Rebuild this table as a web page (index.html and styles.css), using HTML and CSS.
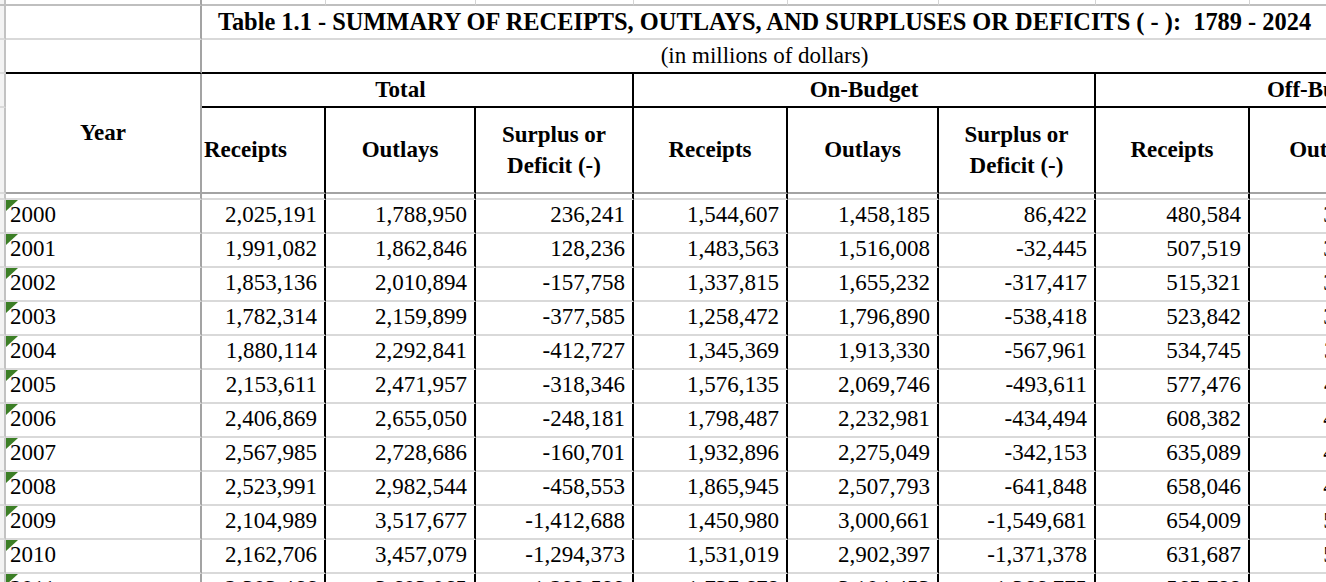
FILE: index.html
```html
<!DOCTYPE html>
<html lang="en">
<head>
<meta charset="utf-8">
<title>Table 1.1 - Summary of Receipts, Outlays, and Surpluses or Deficits</title>
<link rel="stylesheet" href="styles.css">
</head>
<body>
<div class="sheet">
  <!-- top sliver row -->
  <div class="s top"></div>
  <div class="top yearcol"></div>
  <div class="top"></div><div class="top"></div><div class="top"></div><div class="top"></div><div class="top"></div><div class="top"></div><div class="top"></div><div class="top"></div><div class="top"></div>

  <!-- title row -->
  <div class="s"></div>
  <div class="c frz"></div>
  <div class="c title span9">Table 1.1 - SUMMARY OF RECEIPTS, OUTLAYS, AND SURPLUSES OR DEFICITS ( - ):&nbsp; 1789 - 2024</div>

  <!-- subtitle row -->
  <div class="s"></div>
  <div class="c frz bb-black"></div>
  <div class="c sub span9 bb-black">(in millions of dollars)</div>

  <!-- group header row -->
  <div class="s"></div>
  <div class="c frz year bb-frz">Year</div>
  <div class="c grp total span3 br-black bb-black">Total</div>
  <div class="c grp span3 br-black bb-black">On-Budget</div>
  <div class="c grp span3 bb-black">Off-Budget</div>

  <!-- column header row -->
  <div class="s"></div>
  <div class="c hd hd-left br-black bb-frz">Receipts</div>
  <div class="c hd br-black bb-frz">Outlays</div>
  <div class="c hd br-black bb-frz">Surplus or<br>Deficit (-)</div>
  <div class="c hd br-black bb-frz">Receipts</div>
  <div class="c hd br-black bb-frz">Outlays</div>
  <div class="c hd br-black bb-frz">Surplus or<br>Deficit (-)</div>
  <div class="c hd br-black bb-frz">Receipts</div>
  <div class="c hd br-black bb-frz">Outlays</div>
  <div class="c hd br-black bb-frz">Surplus or<br>Deficit (-)</div>

  <!-- sliver row -->
  <div class="s"></div>
  <div class="c frz"></div>
  <div class="c br-black"></div><div class="c br-black"></div><div class="c br-black"></div><div class="c br-black"></div><div class="c br-black"></div><div class="c br-black"></div><div class="c br-black"></div><div class="c br-black"></div><div class="c br-black"></div>

  <!-- data rows -->
  <div class="s"></div><div class="c frz yr"><span class="flag"></span>2000</div>
  <div class="c n">2,025,191</div><div class="c n">1,788,950</div><div class="c n">236,241</div><div class="c n">1,544,607</div><div class="c n">1,458,185</div><div class="c n">86,422</div><div class="c n">480,584</div><div class="c n">330,765</div><div class="c n">149,819</div>

  <div class="s"></div><div class="c frz yr"><span class="flag"></span>2001</div>
  <div class="c n">1,991,082</div><div class="c n">1,862,846</div><div class="c n">128,236</div><div class="c n">1,483,563</div><div class="c n">1,516,008</div><div class="c n">-32,445</div><div class="c n">507,519</div><div class="c n">346,838</div><div class="c n">160,681</div>

  <div class="s"></div><div class="c frz yr"><span class="flag"></span>2002</div>
  <div class="c n">1,853,136</div><div class="c n">2,010,894</div><div class="c n">-157,758</div><div class="c n">1,337,815</div><div class="c n">1,655,232</div><div class="c n">-317,417</div><div class="c n">515,321</div><div class="c n">355,662</div><div class="c n">159,659</div>

  <div class="s"></div><div class="c frz yr"><span class="flag"></span>2003</div>
  <div class="c n">1,782,314</div><div class="c n">2,159,899</div><div class="c n">-377,585</div><div class="c n">1,258,472</div><div class="c n">1,796,890</div><div class="c n">-538,418</div><div class="c n">523,842</div><div class="c n">363,009</div><div class="c n">160,833</div>

  <div class="s"></div><div class="c frz yr"><span class="flag"></span>2004</div>
  <div class="c n">1,880,114</div><div class="c n">2,292,841</div><div class="c n">-412,727</div><div class="c n">1,345,369</div><div class="c n">1,913,330</div><div class="c n">-567,961</div><div class="c n">534,745</div><div class="c n">379,511</div><div class="c n">155,234</div>

  <div class="s"></div><div class="c frz yr"><span class="flag"></span>2005</div>
  <div class="c n">2,153,611</div><div class="c n">2,471,957</div><div class="c n">-318,346</div><div class="c n">1,576,135</div><div class="c n">2,069,746</div><div class="c n">-493,611</div><div class="c n">577,476</div><div class="c n">402,211</div><div class="c n">175,265</div>

  <div class="s"></div><div class="c frz yr"><span class="flag"></span>2006</div>
  <div class="c n">2,406,869</div><div class="c n">2,655,050</div><div class="c n">-248,181</div><div class="c n">1,798,487</div><div class="c n">2,232,981</div><div class="c n">-434,494</div><div class="c n">608,382</div><div class="c n">422,069</div><div class="c n">186,313</div>

  <div class="s"></div><div class="c frz yr"><span class="flag"></span>2007</div>
  <div class="c n">2,567,985</div><div class="c n">2,728,686</div><div class="c n">-160,701</div><div class="c n">1,932,896</div><div class="c n">2,275,049</div><div class="c n">-342,153</div><div class="c n">635,089</div><div class="c n">453,637</div><div class="c n">181,452</div>

  <div class="s"></div><div class="c frz yr"><span class="flag"></span>2008</div>
  <div class="c n">2,523,991</div><div class="c n">2,982,544</div><div class="c n">-458,553</div><div class="c n">1,865,945</div><div class="c n">2,507,793</div><div class="c n">-641,848</div><div class="c n">658,046</div><div class="c n">474,751</div><div class="c n">183,295</div>

  <div class="s"></div><div class="c frz yr"><span class="flag"></span>2009</div>
  <div class="c n">2,104,989</div><div class="c n">3,517,677</div><div class="c n">-1,412,688</div><div class="c n">1,450,980</div><div class="c n">3,000,661</div><div class="c n">-1,549,681</div><div class="c n">654,009</div><div class="c n">517,016</div><div class="c n">136,993</div>

  <div class="s"></div><div class="c frz yr"><span class="flag"></span>2010</div>
  <div class="c n">2,162,706</div><div class="c n">3,457,079</div><div class="c n">-1,294,373</div><div class="c n">1,531,019</div><div class="c n">2,902,397</div><div class="c n">-1,371,378</div><div class="c n">631,687</div><div class="c n">554,682</div><div class="c n">77,005</div>

  <div class="s"></div><div class="c frz yr"><span class="flag"></span>2011</div>
  <div class="c n">2,303,466</div><div class="c n">3,603,065</div><div class="c n">-1,299,599</div><div class="c n">1,737,678</div><div class="c n">3,104,453</div><div class="c n">-1,366,775</div><div class="c n">565,788</div><div class="c n">498,612</div><div class="c n">67,176</div>
</div>
</body>
</html>
```

FILE: styles.css
```css
html, body {
  margin: 0;
  padding: 0;
  background: #ffffff;
  overflow: hidden;
}

body {
  font-family: "Liberation Serif", "Times New Roman", serif;
  font-size: 23px;
  color: #000000;
}

.sheet {
  display: grid;
  grid-template-columns: 6px 196px 124px 150px 158px 154px 151px 157px 154px 157px 144px;
  grid-template-rows: 6px 34px 34px 34px 86px 6px repeat(12, 34px);
  width: max-content;
}

/* generic cell */
.c {
  box-sizing: border-box;
  display: flex;
  align-items: center;
  white-space: nowrap;
  border-bottom: 2px solid #d9d9d9;
  border-right: 2px solid transparent;
  position: relative;
  line-height: 1;
  padding-bottom: 1px;
}

/* left row-header sliver */
.s {
  box-sizing: border-box;
  background: #f3f3f3;
  border-right: 2px solid #c2c2c2;
  border-bottom: 2px solid #dadada;
}

/* top sliver row */
.top {
  box-sizing: border-box;
  border-bottom: 2px solid #bfbfbf;
  border-right: 1px solid #d4d4d4;
}

.s.top {
  border-right: 2px solid #c2c2c2;
}

.top.yearcol {
  border-right: 2px solid #a3a3a3;
}

/* frozen-pane column divider */
.frz {
  border-right: 2px solid #a3a3a3;
}

.br-black {
  border-right: 2px solid #000000;
}

.bb-black {
  border-bottom: 2px solid #000000;
}

.bb-frz {
  border-bottom: 2px solid #a3a3a3;
}

.span9 {
  grid-column: span 9;
}

.span3 {
  grid-column: span 3;
}

.title {
  font-weight: bold;
  font-size: 24.4px;
  justify-content: center;
  padding-right: 222px;
  padding-bottom: 0;
}

.sub {
  justify-content: center;
  padding-right: 222px;
}

.year {
  grid-row: span 2;
  font-weight: bold;
  justify-content: center;
}

.grp {
  font-weight: bold;
  justify-content: center;
}

.grp.total {
  padding-right: 33px;
}

.hd {
  font-weight: bold;
  justify-content: center;
  text-align: center;
  line-height: 31px;
}

.hd-left {
  justify-content: flex-start;
  text-align: left;
  padding-left: 2px;
}

/* data cells */
.n {
  justify-content: flex-end;
  padding-right: 7px;
  padding-bottom: 3px;
  border-right: 2px solid #000000;
}

.yr {
  justify-content: flex-start;
  padding-left: 4px;
  padding-bottom: 3px;
}

/* Excel "number stored as text" indicator */
.flag {
  position: absolute;
  left: 0;
  top: 0;
  width: 12px;
  height: 11px;
  background: #3c7f26;
  clip-path: polygon(0 0, 100% 0, 0 100%);
}
```
